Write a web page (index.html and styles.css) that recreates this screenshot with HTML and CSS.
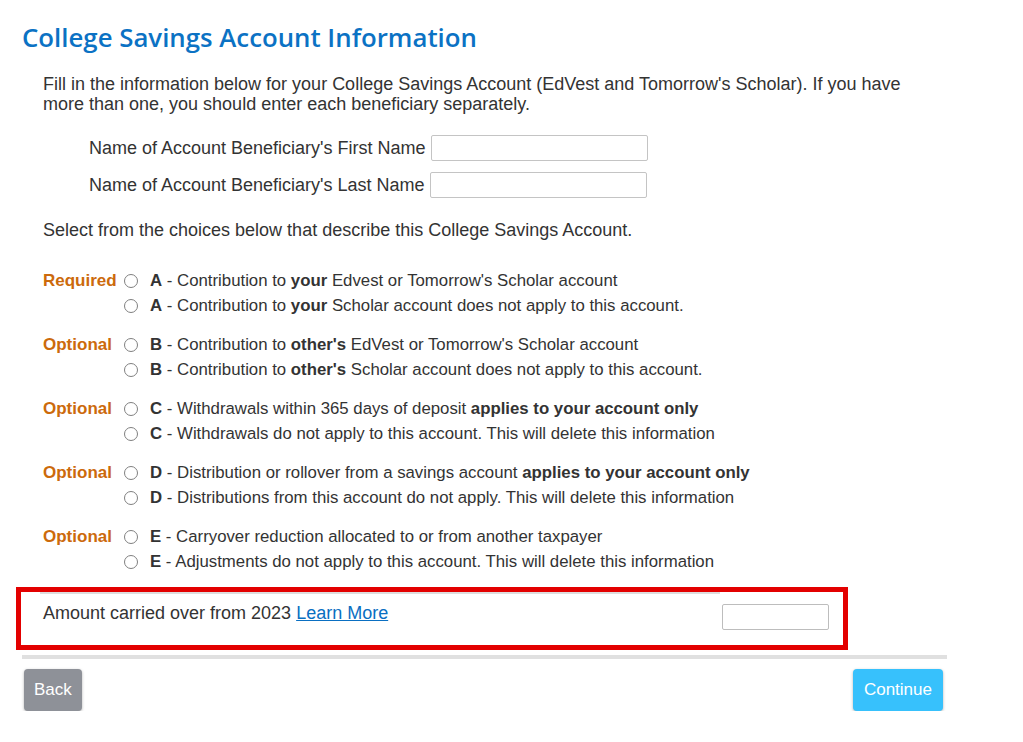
FILE: index.html
```html
<!DOCTYPE html>
<html lang="en">
<head>
    <meta charset="UTF-8">
    <meta name="viewport" content="width=device-width, initial-scale=1.0">
    <title>College Savings Account Information</title>
    <link rel="stylesheet" href="styles.css">
</head>
<body>
    <div class="page">
        <h1>College Savings Account Information</h1>

        <p class="intro">Fill in the information below for your College Savings Account (EdVest and Tomorrow's Scholar). If you have more than one, you should enter each beneficiary separately.</p>

        <div class="names">
            <div class="name-row">
                <label for="firstName">Name of Account Beneficiary's First Name</label>
                <input type="text" id="firstName">
            </div>
            <div class="name-row">
                <label for="lastName">Name of Account Beneficiary's Last Name</label>
                <input type="text" id="lastName">
            </div>
        </div>

        <p class="select-text">Select from the choices below that describe this College Savings Account.</p>

        <div class="choices">
            <div class="group">
                <span class="tag">Required</span>
                <div class="options">
                    <label class="option"><input type="radio" name="a"><span><b>A</b> - Contribution to <b>your</b> Edvest or Tomorrow's Scholar account</span></label>
                    <label class="option"><input type="radio" name="a"><span><b>A</b> - Contribution to <b>your</b> Scholar account does not apply to this account.</span></label>
                </div>
            </div>
            <div class="group">
                <span class="tag">Optional</span>
                <div class="options">
                    <label class="option"><input type="radio" name="b"><span><b>B</b> - Contribution to <b>other's</b> EdVest or Tomorrow's Scholar account</span></label>
                    <label class="option"><input type="radio" name="b"><span><b>B</b> - Contribution to <b>other's</b> Scholar account does not apply to this account.</span></label>
                </div>
            </div>
            <div class="group">
                <span class="tag">Optional</span>
                <div class="options">
                    <label class="option"><input type="radio" name="c"><span><b>C</b> - Withdrawals within 365 days of deposit <b>applies to your account only</b></span></label>
                    <label class="option"><input type="radio" name="c"><span><b>C</b> - Withdrawals do not apply to this account. This will delete this information</span></label>
                </div>
            </div>
            <div class="group">
                <span class="tag">Optional</span>
                <div class="options">
                    <label class="option"><input type="radio" name="d"><span><b>D</b> - Distribution or rollover from a savings account <b>applies to your account only</b></span></label>
                    <label class="option"><input type="radio" name="d"><span><b>D</b> - Distributions from this account do not apply. This will delete this information</span></label>
                </div>
            </div>
            <div class="group">
                <span class="tag">Optional</span>
                <div class="options">
                    <label class="option"><input type="radio" name="e"><span><b>E</b> - Carryover reduction allocated to or from another taxpayer</span></label>
                    <label class="option"><input type="radio" name="e"><span><b>E</b> - Adjustments do not apply to this account. This will delete this information</span></label>
                </div>
            </div>
        </div>

        <div class="amount-box">
            <div class="amount-label">Amount carried over from 2023 <a href="#">Learn More</a></div>
            <input type="text" class="amount-input">
        </div>

        <div class="footer">
            <button class="btn btn-back">Back</button>
            <button class="btn btn-continue">Continue</button>
        </div>
    </div>
</body>
</html>
```

FILE: styles.css
```css
body {
    margin: 0;
    font-family: "Liberation Sans", Arial, sans-serif;
    font-size: 18px;
    color: #333;
    background-color: #fff;
}
.page {
    width: 1000px;
}
h1 {
    margin: 0;
    padding: 21px 0 0 22px;
    font-family: "Open Sans", sans-serif;
    font-size: 25.8px;
    font-weight: 600;
    line-height: 32px;
    color: #0b72c4;
}
.intro {
    margin: 21px 0 0 43px;
    width: 870px;
    line-height: 20px;
}
.names {
    margin: 21px 0 0 89px;
    display: flex;
    flex-direction: column;
    gap: 11px;
}
.name-row {
    display: flex;
    align-items: center;
    gap: 5px;
    height: 26px;
}
.name-row input {
    width: 217px;
    height: 26px;
    box-sizing: border-box;
    border: 1px solid #c4c4c4;
    border-radius: 2px;
    margin: 0;
}
.select-text {
    margin: 22px 0 0 43px;
    line-height: 20px;
}
.choices {
    margin: 28px 0 0 43px;
    display: flex;
    flex-direction: column;
    gap: 14px;
    font-size: 16.8px;
}
.group {
    display: flex;
}
.tag {
    width: 81px;
    height: 25px;
    line-height: 25px;
    font-size: 17px;
    font-weight: bold;
    color: #cc6a0c;
}
.options {
    display: flex;
    flex-direction: column;
}
.option {
    display: flex;
    align-items: center;
    height: 25px;
}
.option input {
    appearance: none;
    -webkit-appearance: none;
    width: 14px;
    height: 14px;
    margin: 0 12px 0 0;
    border: 1px solid #808080;
    border-radius: 50%;
    background: #fff;
}
.amount-box {
    margin: 13px 0 0 16px;
    width: 822px;
    height: 53px;
    border: 5px solid #e30000;
    display: flex;
}
.amount-label {
    margin-left: 19px;
    width: 677px;
    border-top: 2px solid #ddd;
    padding: 9px 0 0 3px;
    line-height: 20px;
}
.amount-label a {
    color: #0a6fc2;
}
.amount-input {
    margin: 12px 0 0 2px;
    width: 107px;
    height: 26px;
    box-sizing: border-box;
    border: 1px solid #bdbdbd;
    border-radius: 2px;
}
.footer {
    margin: 5px 0 0 22px;
    width: 925px;
    border-top: 4px solid #e0e0e0;
    padding: 10px 4px 0 2px;
    box-sizing: border-box;
    display: flex;
    justify-content: space-between;
}
.btn {
    height: 42px;
    padding: 0 11px;
    font-family: "Liberation Sans", Arial, sans-serif;
    font-size: 17px;
    color: #fff;
    border: none;
    border-radius: 4px;
    box-shadow: 0 1px 3px rgba(0, 0, 0, 0.3);
    cursor: pointer;
}
.btn-back {
    padding: 0 10px;
    background-color: #8e9198;
}
.btn-continue {
    background-color: #37c1fc;
}
```
